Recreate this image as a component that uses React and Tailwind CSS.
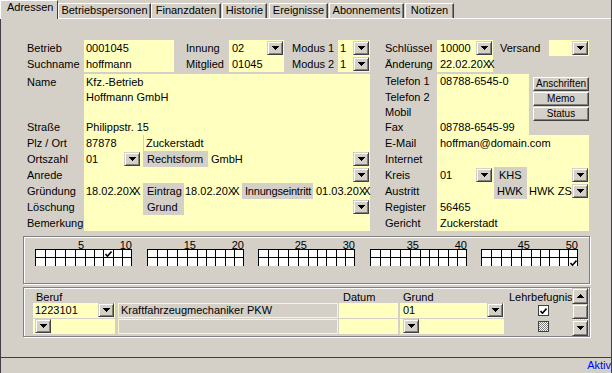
import React from "react";

const Y = "bg-[#ffffc0]";
const G = "bg-[#d4d0c8]";

function Tri({ up }) {
  return (
    <svg width="7" height="4" viewBox="0 0 7 4" shapeRendering="crispEdges">
      <path
        d={up ? "M3 0h1v1h1v1h1v1h1v1H0V3h1V2h1V1h1z" : "M0 0h7v1H6v1H5v1H4v1H3V3H2V2H1V1H0z"}
        fill="#000"
      />
    </svg>
  );
}

function Tick() {
  return (
    <svg width="7" height="6" viewBox="0 0 7 6">
      <path d="M0.5 3l2 2.2 4-4.7" stroke="#000" strokeWidth="1.6" fill="none" />
    </svg>
  );
}

// combobox arrow button
function Dd({ className = "" }) {
  return (
    <div
      className={`flex h-[14px] w-[16px] shrink-0 items-center justify-center border border-t-[#d4d0c8] border-l-[#d4d0c8] border-r-[#404040] border-b-[#404040] bg-[#d4d0c8] shadow-[inset_1px_1px_0_#fff,inset_-1px_-1px_0_#808080] ${className}`}
    >
      <Tri />
    </div>
  );
}

function Btn({ children }) {
  return (
    <div className="flex h-[14px] w-[56px] items-center justify-center border border-t-white border-l-white border-r-[#404040] border-b-[#404040] text-[10px] leading-[12px] shadow-[inset_-1px_-1px_0_#808080]">
      {children}
    </div>
  );
}

function Row({ label, lw, vw, children }) {
  return (
    <div className="flex h-[16px] leading-[16px]">
      <div className={`shrink-0 ${lw}`}>{label}</div>
      <div className={`flex items-center ${vw} ${Y}`}>{children}</div>
    </div>
  );
}

const Xx = () => <span className="tracking-[-3px]">XX</span>;

const cellW = ["w-[10px]", "w-[10px]", "w-[10px]", "w-[10px]", "w-[10px]", "w-[9px]", "w-[9px]", "w-[10px]", "w-[9px]", "w-[9px]"];

function Grid({ n, className = "", top = -1, bottom = -1 }) {
  return (
    <div className={`flex w-[97px] flex-col ${className}`}>
      <div className="flex h-[9px] leading-[11px]">
        <div className="w-[50px] pr-[1px] text-right">{n + 4}</div>
        <div className="flex-1 text-right">{n + 9}</div>
      </div>
      <div className="flex border-r border-black">
        {cellW.map((w, i) => (
          <div key={i} className={`flex flex-col border-l border-black bg-white ${w}`}>
            <div className="flex h-[8px] items-end justify-center border-t border-black">
              {top === i && <Tick />}
            </div>
            <div className="flex h-[9px] items-end justify-center border-t border-black">
              {bottom === i && <Tick />}
            </div>
          </div>
        ))}
      </div>
    </div>
  );
}

const tabs = [
  ["Betriebspersonen", "w-[93px]"],
  ["Finanzdaten", "w-[70px]"],
  ["Historie", "ml-[1px] w-[45px]"],
  ["Ereignisse", "ml-[2px] w-[59px]"],
  ["Abonnements", "ml-[1px] w-[75px]"],
  ["Notizen", "ml-[1px] w-[49px]"],
];

const etched = "border border-[#808080] shadow-[inset_1px_1px_0_#fff,1px_1px_0_#fff]";

export default function App() {
  return (
    <div className="flex h-[373px] w-[612px] flex-col overflow-hidden whitespace-nowrap border-r border-[#404040] bg-[#d4d0c8] font-['Liberation_Sans',Arial,sans-serif] text-[11px] leading-[11px] text-black">
      {/* ===== Tabs ===== */}
      <div className="flex h-[18px] shrink-0 items-end">
        <div className="relative z-10 -mb-px h-[19px] w-[58px] border-l border-t border-white border-r border-r-[#404040] bg-[#d4d0c8] pl-[6px] pt-[1px]">
          Adressen
        </div>
        {tabs.map(([t, w]) => (
          <div
            key={t}
            className={`h-[15px] border-l border-t border-white border-r border-r-[#404040] pt-[1px] text-center shadow-[inset_-1px_0_0_#808080] ${w}`}
          >
            {t}
          </div>
        ))}
      </div>

      <div className="flex flex-1 flex-col border-l border-[#404040]">
        {/* ===== Panel ===== */}
        <div className="flex h-[340px] shrink-0 flex-col border-t border-t-white border-b border-b-[#404040] pl-[22px] pt-[21px]">
          <div className="ml-[4px] flex gap-[15px]">
            {/* left block */}
            <div className="flex w-[343px] flex-col">
              <div className="flex h-[16px] leading-[16px]">
                <div className="w-[57px]">Betrieb</div>
                <div className={`w-[90px] pl-[2px] ${Y}`}>0001045</div>
                <div className="w-[12px]" />
                <div className="w-[43px]">Innung</div>
                <div className={`flex w-[55px] items-center justify-between pl-[3px] ${Y}`}>
                  02
                  <Dd className="mr-[1px]" />
                </div>
                <div className="w-[8px]" />
                <div className="w-[46px]">Modus 1</div>
                <div className={`flex w-[32px] items-center justify-between pl-[2px] ${Y}`}>
                  1
                  <Dd className="mr-[1px]" />
                </div>
              </div>
              <div className="flex h-[16px] leading-[16px]">
                <div className="w-[57px]">Suchname</div>
                <div className={`w-[90px] pl-[2px] ${Y}`}>hoffmann</div>
                <div className="w-[12px]" />
                <div className="w-[43px]">Mitglied</div>
                <div className={`w-[55px] pl-[3px] ${Y}`}>01045</div>
                <div className="w-[8px]" />
                <div className="w-[46px]">Modus 2</div>
                <div className={`flex w-[32px] items-center justify-between pl-[2px] ${Y}`}>
                  1
                  <Dd className="mr-[1px]" />
                </div>
              </div>

              <div className="mt-[2px] flex h-[45px]">
                <div className="w-[57px] leading-[16px]">Name</div>
                <div className={`w-[286px] pl-[2px] pt-[1px] leading-[15px] ${Y}`}>
                  Kfz.-Betrieb
                  <br />
                  Hoffmann GmbH
                </div>
              </div>
              <Row label="Straße" lw="w-[57px]" vw="w-[286px]">
                <span className="pl-[2px]">Philippstr. 15</span>
              </Row>
              <Row label="Plz / Ort" lw="w-[57px]" vw="w-[286px]">
                <div className="w-[59px] pl-[2px]">87878</div>
                <div className="h-full flex-1 border-l border-[#d4d0c8] pl-[2px]">Zuckerstadt</div>
              </Row>
              <Row label="Ortszahl" lw="w-[57px]" vw="w-[286px]">
                <div className="flex w-[57px] items-center justify-between pl-[2px]">
                  01
                  <Dd className="mr-[1px]" />
                </div>
                <div className={`ml-[2px] h-full w-[65px] pl-[4px] ${G}`}>Rechtsform</div>
                <div className="flex flex-1 items-center justify-between pl-[3px]">
                  GmbH
                  <Dd className="mr-[1px]" />
                </div>
              </Row>
              <Row label="Anrede" lw="w-[57px]" vw="w-[286px] justify-end">
                <Dd className="mr-[1px]" />
              </Row>
              <Row label="Gründung" lw="w-[57px]" vw="w-[286px]">
                <div className="w-[59px] pl-[2px]">
                  18.02.20<Xx />
                </div>
                <div className={`h-full w-[41px] pl-[4px] ${G}`}>Eintrag</div>
                <div className="w-[58px] pl-[1px]">
                  18.02.20<Xx />
                </div>
                <div className={`h-full w-[71px] overflow-hidden pl-[3px] tracking-[-0.2px] ${G}`}>Innungseintritt</div>
                <div className="flex-1 pl-[3px]">
                  01.03.20<Xx />
                </div>
              </Row>
              <Row label="Löschung" lw="w-[57px]" vw="w-[286px]">
                <div className="w-[59px]" />
                <div className={`h-full w-[41px] pl-[4px] ${G}`}>Grund</div>
                <div className="flex flex-1 items-center justify-end">
                  <Dd className="mr-[1px]" />
                </div>
              </Row>
              <Row label="Bemerkung" lw="w-[57px]" vw="w-[286px]" />
            </div>

            {/* right block */}
            <div className="flex w-[204px] flex-col">
              <div className="flex h-[16px] leading-[16px]">
                <div className="w-[52px]">Schlüssel</div>
                <div className={`flex w-[56px] items-center justify-between pl-[3px] ${Y}`}>
                  10000
                  <Dd className="mr-[1px]" />
                </div>
                <div className="w-[7px]" />
                <div className="w-[49px]">Versand</div>
                <div className={`flex w-[40px] items-center justify-end ${Y}`}>
                  <Dd className="mr-[1px]" />
                </div>
              </div>
              <div className="flex h-[16px] leading-[16px]">
                <div className="w-[52px]">Änderung</div>
                <div className={`w-[56px] pl-[3px] ${Y}`}>
                  22.02.20<Xx />
                </div>
              </div>

              <div className="mt-[2px] flex h-[61px]">
                <div className="flex w-[52px] flex-col">
                  <div className="h-[15px] leading-[15px]">Telefon 1</div>
                  <div className="h-[15px] leading-[16px]">Telefon 2</div>
                  <div className="h-[15px] leading-[16px]">Mobil</div>
                  <div className="h-[16px] leading-[16px]">Fax</div>
                </div>
                <div className={`flex w-[92px] flex-col pl-[3px] ${Y}`}>
                  <div className="h-[15px] leading-[15px]">08788-6545-0</div>
                  <div className="h-[15px]" />
                  <div className="h-[15px]" />
                  <div className="h-[16px] leading-[16px]">08788-6545-99</div>
                </div>
                <div className="flex w-[60px] flex-col gap-[1px] pl-[4px] pt-[3px]">
                  <Btn>Anschriften</Btn>
                  <Btn>Memo</Btn>
                  <Btn>Status</Btn>
                </div>
              </div>
              <Row label="E-Mail" lw="w-[52px]" vw="w-[152px]">
                <span className="pl-[3px]">hoffman@domain.com</span>
              </Row>
              <Row label="Internet" lw="w-[52px]" vw="w-[152px]" />
              <Row label="Kreis" lw="w-[52px]" vw="w-[152px]">
                <div className="flex w-[56px] items-center justify-between pl-[3px]">
                  01
                  <Dd className="mr-[1px]" />
                </div>
                <div className={`ml-[1px] h-full w-[33px] pl-[5px] ${G}`}>KHS</div>
                <div className="flex flex-1 items-center justify-end">
                  <Dd className="mr-[1px]" />
                </div>
              </Row>
              <Row label="Austritt" lw="w-[52px]" vw="w-[152px]">
                <div className="w-[56px]" />
                <div className={`ml-[1px] h-full w-[33px] pl-[3px] ${G}`}>HWK</div>
                <div className="flex flex-1 items-center justify-between pl-[2px]">
                  HWK ZS
                  <Dd className="mr-[1px]" />
                </div>
              </Row>
              <Row label="Register" lw="w-[52px]" vw="w-[152px]">
                <span className="pl-[3px]">56465</span>
              </Row>
              <Row label="Gericht" lw="w-[52px]" vw="w-[152px]">
                <span className="pl-[3px]">Zuckerstadt</span>
              </Row>
            </div>
          </div>

          {/* ===== Day grid ===== */}
          <div className={`mt-[5px] flex h-[48px] w-[567px] pl-[11px] pt-[3px] ${etched}`}>
            <Grid n={1} top={7} />
            <Grid n={11} className="ml-[15px]" />
            <Grid n={21} className="ml-[14px]" />
            <Grid n={31} className="ml-[15px]" />
            <Grid n={41} className="ml-[14px]" bottom={9} />
          </div>

          {/* ===== Beruf table ===== */}
          <div className={`mt-[3px] flex h-[50px] w-[567px] ${etched}`}>
            <div className="flex w-[548px] flex-col pl-[9px]">
              <div className="flex h-[15px] pt-[2px] leading-[14px]">
                <div className="w-[82px] pl-[3px]">Beruf</div>
                <div className="w-[224px]" />
                <div className="w-[61px] pl-[4px]">Datum</div>
                <div className="w-[104px] pl-[3px]">Grund</div>
                <div className="w-[68px] pl-[5px]">Lehrbefugnis</div>
              </div>
              {[
                ["1223101", "Kraftfahrzeugmechaniker PKW", "01", true],
                ["", "", "", false],
              ].map(([code, name, grund, checked], i) => (
                <div key={i} className="flex h-[16px] leading-[15px]">
                  <div className={`flex h-[15px] w-[82px] items-start justify-between pl-[2px] ${Y}`}>
                    {code}
                    <Dd className="mr-[1px]" />
                  </div>
                  <div className="ml-[3px] h-[15px] w-[220px] border border-[#fbf7c8] pl-[2px] leading-[13px]">{name}</div>
                  <div className={`ml-[1px] h-[15px] w-[59px] ${Y}`} />
                  <div className={`ml-[2px] flex h-[15px] w-[104px] items-start justify-between pl-[3px] ${Y}`}>
                    {grund}
                    <Dd className="mr-[1px]" />
                  </div>
                  <div className="w-[68px]">
                    {checked ? (
                      <div className="ml-[34px] mt-[2px] flex h-[11px] w-[11px] items-center justify-center border border-[#404040] bg-white">
                        <Tick />
                      </div>
                    ) : (
                      <div className="ml-[34px] mt-[2px] h-[11px] w-[11px] border border-[#404040] bg-[image:repeating-conic-gradient(#808080_0%_25%,#ffffff_0%_50%)] bg-[length:2px_2px]" />
                    )}
                  </div>
                </div>
              ))}
            </div>
            {/* scrollbar */}
            <div className="flex w-[16px] flex-col">
              <div className="flex h-[16px] items-center justify-center border border-t-[#d4d0c8] border-l-[#d4d0c8] border-r-[#404040] border-b-[#404040] shadow-[inset_1px_1px_0_#fff,inset_-1px_-1px_0_#808080]">
                <Tri up />
              </div>
              <div className="h-[15px] border border-t-[#d4d0c8] border-l-[#d4d0c8] border-r-[#404040] border-b-[#404040] shadow-[inset_1px_1px_0_#fff,inset_-1px_-1px_0_#808080]" />
              <div className="h-[1px] bg-[image:repeating-conic-gradient(#ffffff_0%_25%,#d4d0c8_0%_50%)] bg-[length:2px_2px]" />
              <div className="flex h-[16px] items-center justify-center border border-t-[#d4d0c8] border-l-[#d4d0c8] border-r-[#404040] border-b-[#404040] shadow-[inset_1px_1px_0_#fff,inset_-1px_-1px_0_#808080]">
                <Tri />
              </div>
            </div>
          </div>
        </div>

        {/* ===== Status bar ===== */}
        <div className="flex h-[15px] justify-end pt-[1px] leading-[12px] text-[#0000ff]">Aktiv</div>
      </div>
    </div>
  );
}
